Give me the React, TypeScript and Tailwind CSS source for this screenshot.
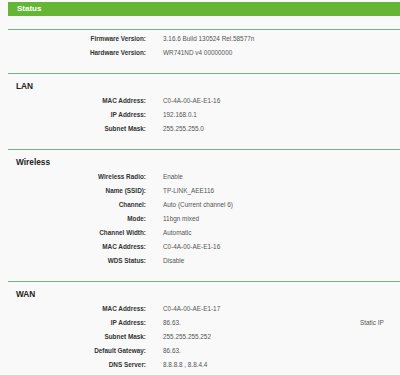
import React from "react";

type Row = { label: string; value: string; extra?: string };

const font = { fontFamily: '"Liberation Sans", Arial, sans-serif' };

function Rows({ rows }: { rows: Row[] }) {
  return (
    <div className="flex flex-col">
      {rows.map((r) => (
        <div key={r.label} className="flex h-[14px] items-center">
          <div className="w-[138px] shrink-0 text-right text-[6.4px] font-bold text-[#333]">{r.label}</div>
          <div className="ml-[17px] w-[197px] shrink-0 text-[6.4px] text-[#555]">{r.value}</div>
          {r.extra && <div className="text-[6.4px] text-[#555]">{r.extra}</div>}
        </div>
      ))}
    </div>
  );
}

function Section({ title, rows }: { title: string; rows: Row[] }) {
  return (
    <div className="border-t border-[#74b088] pb-[13px] pt-[6px]">
      <div className="flex h-[12px] items-center pl-[8px] text-[8.3px] font-bold text-[#222]">{title}</div>
      <div className="mt-[2px]">
        <Rows rows={rows} />
      </div>
    </div>
  );
}

export default function App() {
  return (
    <div className="h-[375px] w-[400px] overflow-hidden bg-[#f9f9f9] pl-[8px] pt-[2px]" style={font}>
      <div className="flex h-[14px] items-center bg-[#64b634] pl-[9px] text-[8px] font-bold text-white">Status</div>
      <div className="h-[13px]" />
      <div className="border-t border-[#74b088] pb-[13px] pt-[2px]">
        <Rows
          rows={[
            { label: "Firmware Version:", value: "3.16.6 Build 130524 Rel.58577n" },
            { label: "Hardware Version:", value: "WR741ND v4 00000000" },
          ]}
        />
      </div>
      <Section
        title="LAN"
        rows={[
          { label: "MAC Address:", value: "C0-4A-00-AE-E1-16" },
          { label: "IP Address:", value: "192.168.0.1" },
          { label: "Subnet Mask:", value: "255.255.255.0" },
        ]}
      />
      <Section
        title="Wireless"
        rows={[
          { label: "Wireless Radio:", value: "Enable" },
          { label: "Name (SSID):", value: "TP-LINK_AEE116" },
          { label: "Channel:", value: "Auto (Current channel 6)" },
          { label: "Mode:", value: "11bgn mixed" },
          { label: "Channel Width:", value: "Automatic" },
          { label: "MAC Address:", value: "C0-4A-00-AE-E1-16" },
          { label: "WDS Status:", value: "Disable" },
        ]}
      />
      <Section
        title="WAN"
        rows={[
          { label: "MAC Address:", value: "C0-4A-00-AE-E1-17" },
          { label: "IP Address:", value: "86.63.", extra: "Static IP" },
          { label: "Subnet Mask:", value: "255.255.255.252" },
          { label: "Default Gateway:", value: "86.63." },
          { label: "DNS Server:", value: "8.8.8.8 , 8.8.4.4" },
        ]}
      />
    </div>
  );
}
